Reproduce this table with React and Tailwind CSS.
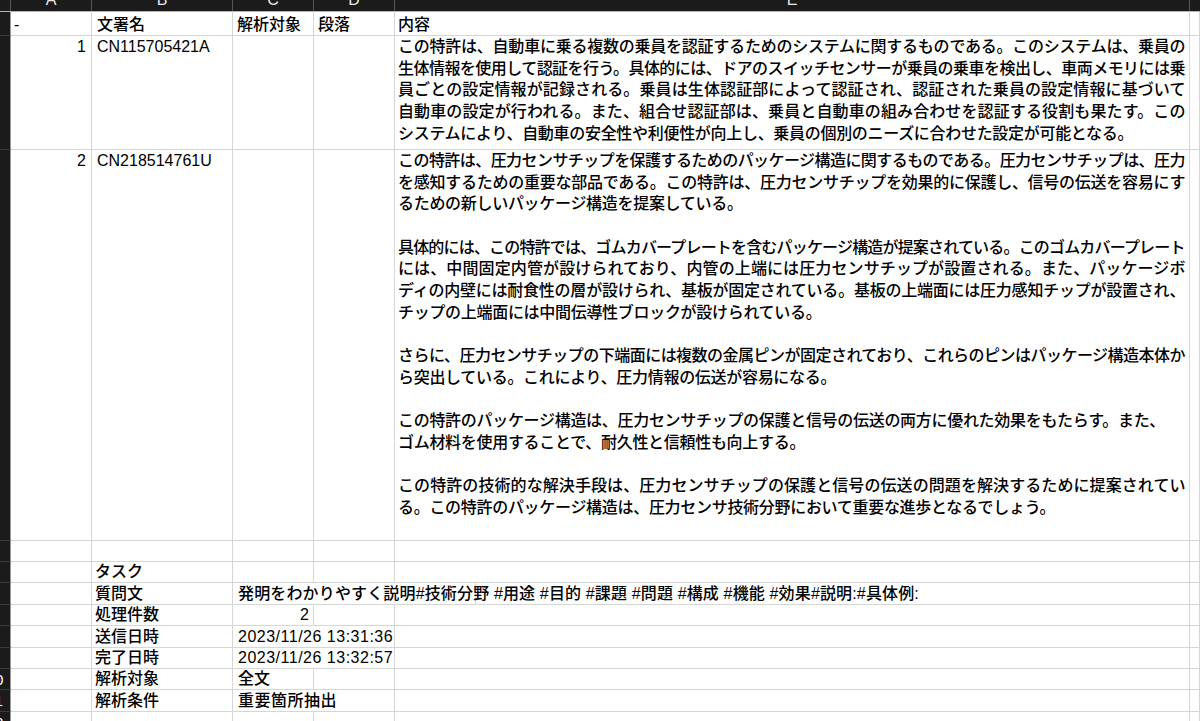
import React from 'react';

const FONT = "[font-family:'Liberation_Sans','Noto_Sans_CJK_JP',sans-serif]";

const row1Lines = [
  ['この特許は、自動車に乗る複数の乗員を認証するためのシステムに関するものである。このシステムは、乗員の', true],
  ['生体情報を使用して認証を行う。具体的には、ドアのスイッチセンサーが乗員の乗車を検出し、車両メモリには乗', true],
  ['員ごとの設定情報が記録される。乗員は生体認証部によって認証され、認証された乗員の設定情報に基づいて', true],
  ['自動車の設定が行われる。また、組合せ認証部は、乗員と自動車の組み合わせを認証する役割も果たす。この', true],
  ['システムにより、自動車の安全性や利便性が向上し、乗員の個別のニーズに合わせた設定が可能となる。', false],
];

const row2Lines = [
  ['この特許は、圧力センサチップを保護するためのパッケージ構造に関するものである。圧力センサチップは、圧力', true],
  ['を感知するための重要な部品である。この特許は、圧力センサチップを効果的に保護し、信号の伝送を容易にす', true],
  ['るための新しいパッケージ構造を提案している。', false],
  ['', false],
  ['具体的には、この特許では、ゴムカバープレートを含むパッケージ構造が提案されている。このゴムカバープレート', true],
  ['には、中間固定内管が設けられており、内管の上端には圧力センサチップが設置される。また、パッケージボ', true],
  ['ディの内壁には耐食性の層が設けられ、基板が固定されている。基板の上端面には圧力感知チップが設置され、', true],
  ['チップの上端面には中間伝導性ブロックが設けられている。', false],
  ['', false],
  ['さらに、圧力センサチップの下端面には複数の金属ピンが固定されており、これらのピンはパッケージ構造本体か', true],
  ['ら突出している。これにより、圧力情報の伝送が容易になる。', false],
  ['', false],
  ['この特許のパッケージ構造は、圧力センサチップの保護と信号の伝送の両方に優れた効果をもたらす。また、', false],
  ['ゴム材料を使用することで、耐久性と信頼性も向上する。', false],
  ['', false],
  ['この特許の技術的な解決手段は、圧力センサチップの保護と信号の伝送の問題を解決するために提案されてい', true],
  ['る。この特許のパッケージ構造は、圧力センサ技術分野において重要な進歩となるでしょう。', false],
];

// the visible sliver of the row-number column
function Strip({ n }) {
  return (
    <div className="w-[11px] shrink-0 overflow-hidden bg-[#1b1b1b] border-r border-r-[#9a9a9a] border-b border-b-[#3a3a3a] flex items-center">
      <div className="w-[40px] shrink-0 -ml-[25px] text-center text-white text-[15px] leading-none">{n}</div>
    </div>
  );
}

function Lines({ lines }) {
  return (
    <div className="pl-[3px]">
      {lines.map(([l, full], i) =>
        full ? (
          <div
            key={i}
            className="w-[786px] h-[21.7px] leading-[21.7px] whitespace-nowrap text-justify [text-align-last:justify] [letter-spacing:-1.5px]"
          >
            {l}
          </div>
        ) : (
          <div key={i} className="h-[21.7px] leading-[21.7px] whitespace-nowrap [letter-spacing:-0.3px]">
            {l || '\u00a0'}
          </div>
        )
      )}
    </div>
  );
}

const cell = 'shrink-0 border-r border-b border-[#d6d6d6] overflow-hidden whitespace-nowrap';

function InfoRow({ h, n, label, value, span, right }) {
  return (
    <div className={`flex ${h}`}>
      <Strip n={n} />
      <div className={`${cell} w-[81px]`} />
      <div className={`${cell} w-[141px] pl-[3px] flex items-center`}>{label}</div>
      {span === 3 && (
        <>
          <div className={`${cell} w-[243px] overflow-visible pl-[5px] flex items-center relative z-10 [letter-spacing:0.15px]`}>{value}</div>
          <div className={`${cell} w-[714px]`} />
        </>
      )}
      {span === 2 && (
        <>
          <div className={`${cell} w-[162px] overflow-visible pl-[5px] flex items-center [letter-spacing:0.5px]`}>{value}</div>
          <div className={`${cell} w-[795px]`} />
        </>
      )}
      {span === 1 && (
        <>
          <div className={`${cell} w-[81px] flex items-center ${right ? 'justify-end pr-[4px]' : 'pl-[5px]'}`}>{value}</div>
          <div className={`${cell} w-[81px]`} />
          <div className={`${cell} w-[795px]`} />
        </>
      )}
      <div className={`${cell} flex-1`} />
    </div>
  );
}

export default function App() {
  return (
    <div className={`w-[1200px] h-[721px] overflow-hidden bg-white text-black text-[16px] font-medium ${FONT}`}>
      {/* column header strip */}
      <div className="flex h-[12px] bg-[#1b1b1b] border-b border-b-[#b5b5b5] overflow-hidden text-[#e8e8e8] text-[16px]">
        <div className="w-[11px] shrink-0 border-r border-r-[#555]" />
        {[
          ['A', 'w-[81px]'],
          ['B', 'w-[141px]'],
          ['C', 'w-[81px]'],
          ['D', 'w-[81px]'],
          ['E', 'w-[795px]'],
        ].map(([l, w]) => (
          <div key={l} className={`${w} shrink-0 border-r border-r-[#555] flex justify-center items-end`}>
            <span className="leading-none mb-[3px]">{l}</span>
          </div>
        ))}
        <div className="flex-1" />
      </div>

      {/* header row */}
      <div className="flex h-[24px]">
        <Strip n="" />
        <div className={`${cell} w-[81px] pl-[3px] flex items-end leading-[20px]`}>-</div>
        <div className={`${cell} w-[141px] pl-[5px] flex items-end leading-[20px]`}>文署名</div>
        <div className={`${cell} w-[81px] pl-[4px] flex items-end leading-[20px]`}>解析対象</div>
        <div className={`${cell} w-[81px] pl-[4px] flex items-end leading-[20px]`}>段落</div>
        <div className={`${cell} w-[795px] pl-[3px] flex items-end leading-[20px]`}>内容</div>
        <div className={`${cell} flex-1`} />
      </div>

      {/* record 1 */}
      <div className="flex h-[114px]">
        <Strip n="" />
        <div className={`${cell} w-[81px] text-right pr-[5px] leading-[21.7px]`}>1</div>
        <div className={`${cell} w-[141px] pl-[5px] leading-[21.7px]`}>CN115705421A</div>
        <div className={`${cell} w-[81px]`} />
        <div className={`${cell} w-[81px]`} />
        <div className={`${cell} w-[795px]`}>
          <Lines lines={row1Lines} />
        </div>
        <div className={`${cell} flex-1`} />
      </div>

      {/* record 2 */}
      <div className="flex h-[391px]">
        <Strip n="" />
        <div className={`${cell} w-[81px] text-right pr-[5px] leading-[21.7px]`}>2</div>
        <div className={`${cell} w-[141px] pl-[5px] leading-[21.7px]`}>CN218514761U</div>
        <div className={`${cell} w-[81px]`} />
        <div className={`${cell} w-[81px]`} />
        <div className={`${cell} w-[795px]`}>
          <Lines lines={row2Lines} />
        </div>
        <div className={`${cell} flex-1`} />
      </div>

      {/* empty row */}
      <div className="flex h-[21px]">
        <Strip n="" />
        <div className={`${cell} w-[81px]`} />
        <div className={`${cell} w-[141px]`} />
        <div className={`${cell} w-[81px]`} />
        <div className={`${cell} w-[81px]`} />
        <div className={`${cell} w-[795px]`} />
        <div className={`${cell} flex-1`} />
      </div>

      <InfoRow h="h-[21px]" n="" label="タスク" value="" span={1} />
      <InfoRow
        h="h-[22px]"
        n=""
        label="質問文"
        value="発明をわかりやすく説明#技術分野 #用途 #目的 #課題 #問題 #構成 #機能 #効果#説明:#具体例:"
        span={3}
      />
      <InfoRow h="h-[21px]" n="" label="処理件数" value="2" span={1} right />
      <InfoRow h="h-[22px]" n="" label="送信日時" value="2023/11/26 13:31:36" span={2} />
      <InfoRow h="h-[21px]" n="" label="完了日時" value="2023/11/26 13:32:57" span={2} />
      <InfoRow h="h-[21px]" n="10" label="解析対象" value="全文" span={1} />
      <InfoRow h="h-[22px]" n="11" label="解析条件" value="重要箇所抽出" span={2} />
      <InfoRow h="h-[21px]" n="12" label="" value="" span={1} />
    </div>
  );
}
